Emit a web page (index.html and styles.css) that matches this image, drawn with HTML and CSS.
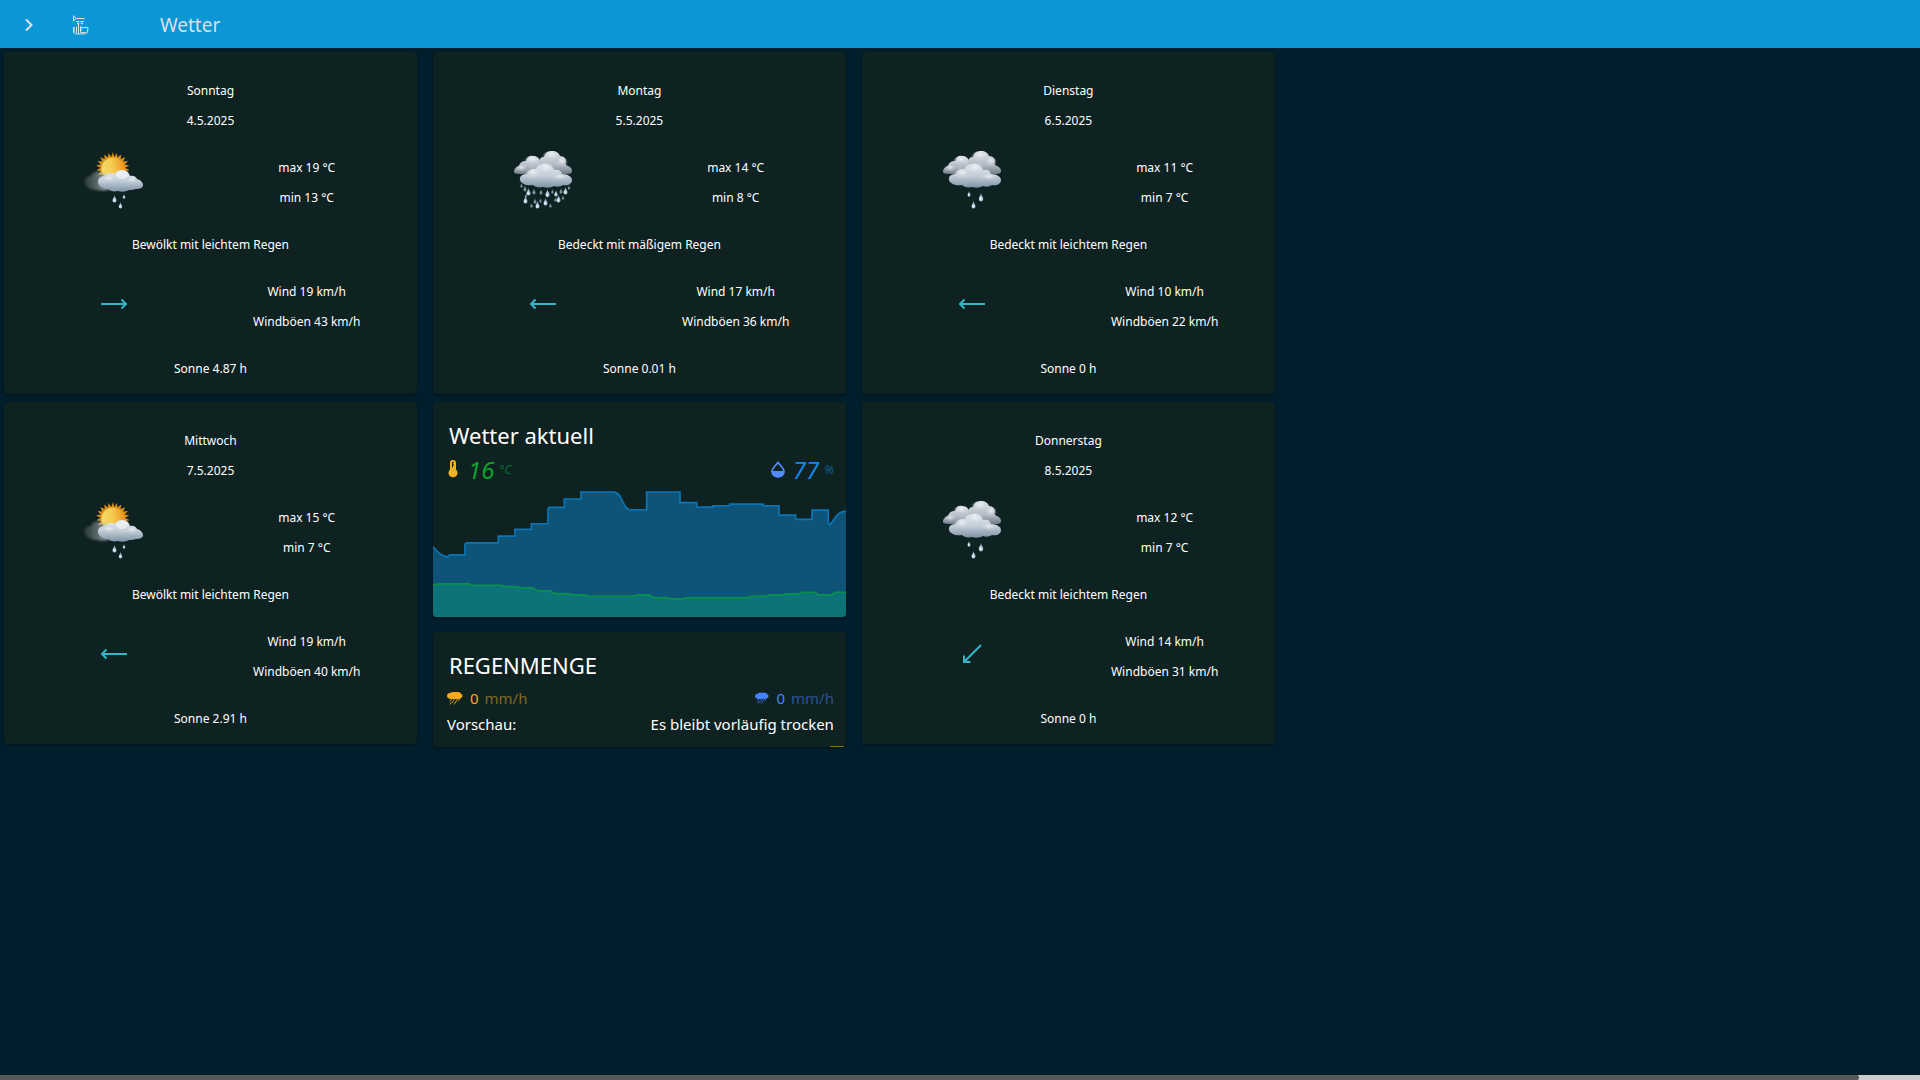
FILE: index.html
```html
<!DOCTYPE html>
<html lang="de">
<head>
  <meta charset="utf-8">
  <meta name="viewport" content="width=device-width, initial-scale=1">
  <title>Wetter</title>
  <link rel="stylesheet" href="styles.css">
</head>
<body>

  <!-- shared icons -->
  <svg class="defs" aria-hidden="true">
    <defs>
      <linearGradient id="cloud-light" x1="0" y1="0" x2="0" y2="1">
        <stop offset="0" stop-color="#e4eaf0"/>
        <stop offset="0.5" stop-color="#c3ced8"/>
        <stop offset="1" stop-color="#7f93a5"/>
      </linearGradient>
      <linearGradient id="cloud-dark" x1="0" y1="0" x2="0" y2="1">
        <stop offset="0" stop-color="#dfe3e9"/>
        <stop offset="0.6" stop-color="#b3bbc6"/>
        <stop offset="1" stop-color="#707b88"/>
      </linearGradient>
      <linearGradient id="haze" x1="0" y1="0" x2="1" y2="0">
        <stop offset="0" stop-color="#8a9496" stop-opacity="0.2"/>
        <stop offset="1" stop-color="#c5cccd" stop-opacity="0.8"/>
      </linearGradient>
      <linearGradient id="sun-ball" x1="0" y1="0.6" x2="1" y2="0.4">
        <stop offset="0" stop-color="#f3dc6c"/>
        <stop offset="0.5" stop-color="#f5cb50"/>
        <stop offset="1" stop-color="#ee9420"/>
      </linearGradient>
      <radialGradient id="puff" cx="0.5" cy="0.3" r="0.6">
        <stop offset="0" stop-color="#f4f6f8" stop-opacity="0.8"/>
        <stop offset="1" stop-color="#b4c0cb" stop-opacity="0"/>
      </radialGradient>
      <filter id="soft" x="-20%" y="-20%" width="140%" height="140%">
        <feGaussianBlur stdDeviation="1.2"/>
      </filter>
    </defs>

    <symbol id="drop" viewBox="0 0 6 10">
      <path d="M3 0c0 3 2.500 4 2.500 6.500a2.500 2.900 0 0 1-5 0C.5 4 3 3 3 0z" fill="#a9c5d6"/>
      <ellipse cx="2.500" cy="6.600" rx="1.200" ry="1.600" fill="#e3f2fa"/>
    </symbol>

    <symbol id="two-clouds" viewBox="0 0 60 60">
      <path d="M1 21c0-4 3-5 5-6 1-4 4-5 7-5 1-4 4-6 7-5 4 0 6 2 7 5 4 1 6 4 6 7 0 5-4 6-9 6H7c-4 0-6-1-6-2z" fill="url(#cloud-dark)"/>
      <path d="M26 11c0-3 2-5 5-5 1-4 4-6 8-6s7 2 8 5c4 0 6 3 6 6-1 2 0 3 2 4 3 1 4 3 4 5 0 3-3 3-7 3H30c-3-3-5-7-4-12z" fill="url(#cloud-dark)"/>
      <ellipse cx="19" cy="10" rx="8" ry="5" fill="url(#puff)"/>
      <ellipse cx="8" cy="18" rx="6" ry="4" fill="url(#puff)"/>
      <ellipse cx="38" cy="6" rx="9" ry="6" fill="url(#puff)"/>
      <ellipse cx="49" cy="12" rx="6" ry="6" fill="url(#puff)"/>
      <path d="M7 29c-1-4 3-6 7-6 1-4 5-6 9-5 1-4 5-5 9-5s8 2 9 6c4-1 7 0 8 4 6 0 10 3 10 6 0 4-4 6-9 5-3 2-6 2-9 1-3 2-8 2-11 1-4 1-8 0-10-2-6 1-12-1-13-5z" fill="url(#cloud-light)"/>
      <ellipse cx="33" cy="19" rx="9" ry="7" fill="url(#puff)"/>
      <ellipse cx="20" cy="24" rx="9" ry="6" fill="url(#puff)"/>
      <ellipse cx="47" cy="27" rx="9" ry="4" fill="url(#puff)"/>
    </symbol>

    <symbol id="sun-rain" viewBox="0 0 60 60">
      <path d="M29 1l1.200 5 2.800-4 .4 4.600 3.800-3.200-.6 4.600 4.600-1.800-2 4.200 4.800-.4-3.400 3.400 4.600 1.200-4.200 2.200 4.600 2.400-5 1 3.600 3.600H14l3-3.600-4.600-1 4.200-2.400-4.600-2.200 4.800-1.200-3.200-3.400 4.600.4-1.800-4.200 4.400 1.800-.6-4.600 3.600 3.200.8-4.600 2.600 4z" fill="#d98f18"/>
      <circle cx="29" cy="18" r="11.500" fill="url(#sun-ball)"/>
      <path d="M0 30c1-4 4-5 7-5 1-4 5-5 9-4 5 1 9 3 10 8v9c-4 2-9 2-13 1-6 0-13-4-13-9z" fill="url(#haze)" filter="url(#soft)"/>
      <path d="M14 31c0-4 3-6 7-6 2-3 6-4 10-2 1-3 4-4 7-4 4 0 7 2 8 6 4-1 6 1 7 3 4 1 6 4 6 6 0 3-3 4-7 4-3 1-5 1-7 1-3 2-8 2-11 1-4 1-8 0-10-2-5 0-10-3-10-7z" fill="url(#cloud-light)"/>
      <ellipse cx="38" cy="24" rx="6" ry="4" fill="#f1f4f7" opacity="0.700"/>
      <ellipse cx="25" cy="29" rx="8" ry="4" fill="url(#puff)"/>
      <ellipse cx="48" cy="30" rx="6" ry="4" fill="url(#puff)"/>
      <use href="#drop" x="28" y="44" width="5" height="8"/>
      <use href="#drop" x="38" y="43" width="4" height="5"/>
      <use href="#drop" x="34" y="51" width="5" height="7"/>
    </symbol>

    <symbol id="light-rain" viewBox="0 0 60 60">
      <use href="#two-clouds" width="60" height="60"/>
      <use href="#drop" x="25" y="40" width="4" height="6"/>
      <use href="#drop" x="36" y="42" width="6" height="9"/>
      <use href="#drop" x="29" y="50" width="5" height="8"/>
    </symbol>

    <symbol id="rain" viewBox="0 0 60 60">
      <g opacity="0.600">
        <use href="#drop" x="7" y="32" width="3" height="5"/>
        <use href="#drop" x="10" y="34" width="4" height="7"/>
        <use href="#drop" x="19" y="37" width="4" height="7"/>
        <use href="#drop" x="26" y="38" width="4" height="6"/>
        <use href="#drop" x="46" y="37" width="4" height="6"/>
        <use href="#drop" x="54" y="34" width="4" height="5"/>
        <use href="#drop" x="11" y="42" width="4" height="5"/>
        <use href="#drop" x="20" y="47" width="4" height="6"/>
        <use href="#drop" x="26" y="47" width="3" height="5"/>
        <use href="#drop" x="38" y="38" width="3" height="5"/>
        <use href="#drop" x="41" y="46" width="3" height="5"/>
        <use href="#drop" x="48" y="44" width="4" height="5"/>
        <use href="#drop" x="17" y="52" width="3" height="5"/>
        <use href="#drop" x="36" y="52" width="3" height="5"/>
      </g>
      <use href="#drop" x="13" y="37" width="5" height="8"/>
      <use href="#drop" x="32" y="38" width="5" height="9"/>
      <use href="#drop" x="41" y="39" width="4" height="7"/>
      <use href="#drop" x="50" y="36" width="5" height="8"/>
      <use href="#drop" x="10" y="45" width="5" height="8"/>
      <use href="#drop" x="30" y="47" width="5" height="8"/>
      <use href="#drop" x="43" y="44" width="5" height="8"/>
      <use href="#drop" x="22" y="50" width="5" height="8"/>
      <use href="#two-clouds" width="60" height="60"/>
    </symbol>

    <symbol id="arrow-right" viewBox="0 0 28 28">
      <path d="M1 14h25M21.500 9.500L26 14l-4.500 4.500" fill="none" stroke="#35b5c5" stroke-width="2"/>
    </symbol>
    <symbol id="arrow-left" viewBox="0 0 28 28">
      <path d="M27 14H2M6.500 9.500L2 14l4.500 4.500" fill="none" stroke="#35b5c5" stroke-width="2"/>
    </symbol>
    <symbol id="arrow-down-left" viewBox="0 0 28 28">
      <path d="M23 5L6 22M6 15.500V22h6.500" fill="none" stroke="#35b5c5" stroke-width="2"/>
    </symbol>

    <symbol id="rain-cloud" viewBox="0 0 16 13">
      <path d="M0 4c0-2 1-3 3-3 1-1 3-1 4-1h4c2 0 3 1 3 2 2 0 2 3 0 4 0 1-2 1-3 1H4C2 7 0 6 0 4z" fill="currentColor"/>
      <path d="M4.500 7L3 9.500M7.500 7L5 11M10.500 7L8 11M12.500 7L11 9.500M4.500 10L3 12.500M8.500 10.500L7 12.500" stroke="currentColor" opacity="0.800" fill="none"/>
    </symbol>
  </svg>

  <header class="topbar">
    <button class="menu-button" type="button" aria-label="Menü öffnen">
      <svg width="8" height="14" viewBox="0 0 8 14"><path d="M1 1.500L6.500 7 1 12.500" fill="none" stroke="#e3e3e3" stroke-width="2"/></svg>
    </button>
    <svg class="logo" width="17" height="20" viewBox="0 0 17 20" fill="none" stroke="#dcdfe1">
      <path d="M1.500.5v6M1.500 1l3 2.500h8M2 5l2-1M4 6.500h3M8.500 6.500H12M5 8.500h2l1-1 1 1h2M6 7.500v2M10 7.500v2"/>
      <path d="M4.500 11.500V18M6.500 8.500V19M1.500 12v5.500l3 1.500h8l3-1.500.5-5H9.500l-1 4.500M8.500 11v6.500h5"/>
      <path d="M2 12v5" stroke-width="2" opacity="0.600"/>
    </svg>
    <h1 class="page-title">Wetter</h1>
  </header>

  <main class="dashboard">

    <section class="card day">
      <div><p>Sonntag</p><p>4.5.2025</p></div>
      <div class="split">
        <svg class="weather" role="img" aria-label="Bewölkt mit leichtem Regen"><use href="#sun-rain"/></svg>
        <div><p>max 19 °C</p><p>min 13 °C</p></div>
      </div>
      <p>Bewölkt mit leichtem Regen</p>
      <div class="split">
        <svg class="arrow"><use href="#arrow-right"/></svg>
        <div><p>Wind 19 km/h</p><p>Windböen 43 km/h</p></div>
      </div>
      <p>Sonne 4.87 h</p>
    </section>

    <section class="card day">
      <div><p>Montag</p><p>5.5.2025</p></div>
      <div class="split">
        <svg class="weather" role="img" aria-label="Bedeckt mit mäßigem Regen"><use href="#rain"/></svg>
        <div><p>max 14 °C</p><p>min 8 °C</p></div>
      </div>
      <p>Bedeckt mit mäßigem Regen</p>
      <div class="split">
        <svg class="arrow"><use href="#arrow-left"/></svg>
        <div><p>Wind 17 km/h</p><p>Windböen 36 km/h</p></div>
      </div>
      <p>Sonne 0.01 h</p>
    </section>

    <section class="card day">
      <div><p>Dienstag</p><p>6.5.2025</p></div>
      <div class="split">
        <svg class="weather" role="img" aria-label="Bedeckt mit leichtem Regen"><use href="#light-rain"/></svg>
        <div><p>max 11 °C</p><p>min 7 °C</p></div>
      </div>
      <p>Bedeckt mit leichtem Regen</p>
      <div class="split">
        <svg class="arrow"><use href="#arrow-left"/></svg>
        <div><p>Wind 10 km/h</p><p>Windböen 22 km/h</p></div>
      </div>
      <p>Sonne 0 h</p>
    </section>

    <section class="card day">
      <div><p>Mittwoch</p><p>7.5.2025</p></div>
      <div class="split">
        <svg class="weather" role="img" aria-label="Bewölkt mit leichtem Regen"><use href="#sun-rain"/></svg>
        <div><p>max 15 °C</p><p>min 7 °C</p></div>
      </div>
      <p>Bewölkt mit leichtem Regen</p>
      <div class="split">
        <svg class="arrow"><use href="#arrow-left"/></svg>
        <div><p>Wind 19 km/h</p><p>Windböen 40 km/h</p></div>
      </div>
      <p>Sonne 2.91 h</p>
    </section>

    <div class="stack">
      <section class="card current">
        <h2>Wetter aktuell</h2>
        <div class="values">
          <div class="value temperature">
            <svg width="10" height="18" viewBox="0 0 10 18">
              <path d="M2 3a3 3 0 0 1 6 0v6.500a4.500 4.500 0 1 1-6 0z" fill="#f5b120"/>
              <path d="M6 2.500H4.500v5M4.500 5H6" fill="none" stroke="#0f2222"/>
            </svg>
            <span class="number">16</span><span class="unit">°C</span>
          </div>
          <div class="value humidity">
            <svg width="14" height="17" viewBox="0 0 14 17">
              <path d="M7 1.400C5 4 1 7.500 1 10.500a6 5.500 0 0 0 12 0C13 7.500 9 4 7 1.400z" fill="none" stroke="#4f8cff" stroke-width="1.700"/>
              <path d="M1 10h12a6 6 0 0 1-12 0z" fill="#4f8cff"/>
            </svg>
            <span class="number">77</span><span class="unit">%</span>
          </div>
        </div>
        <svg class="chart" viewBox="0 0 1239 386" preserveAspectRatio="none" role="img" aria-label="Verlauf von Temperatur und Luftfeuchte">
          <path class="humidity-area" d="M0 176Q25 206 44 206L50 200H96V168L100 164H196V144H246V124H295V107H345V62L349 58H394V33H444V12H541C570 12 568 65 592 65H641V12H741V44H791V57H840V53H890V48H990V53H1038V81H1088V94H1137V66H1186V106L1191 110C1204 96 1212 69 1239 69V386H0z"/>
          <path class="humidity-line" d="M0 176Q25 206 44 206L50 200H96V168L100 164H196V144H246V124H295V107H345V62L349 58H394V33H444V12H541C570 12 568 65 592 65H641V12H741V44H791V57H840V53H890V48H990V53H1038V81H1088V94H1137V66H1186V106L1191 110C1204 96 1212 69 1239 69"/>
          <path class="temperature-area" d="M0 290L20 287H108L118 291H205L215 295H250L265 299H300L315 308H350L365 316H405L415 320H455L465 324H600L612 320H650L662 328H700L712 332H750L765 328H945L957 324H1000L1010 320H1050L1057 317H1098L1108 312H1145L1157 320H1195L1207 312H1239V386H0z"/>
          <path class="temperature-line" d="M0 290L20 287H108L118 291H205L215 295H250L265 299H300L315 308H350L365 316H405L415 320H455L465 324H600L612 320H650L662 328H700L712 332H750L765 328H945L957 324H1000L1010 320H1050L1057 317H1098L1108 312H1145L1157 320H1195L1207 312H1239"/>
        </svg>
      </section>

      <section class="card rainfall">
        <h2>REGENMENGE</h2>
        <div class="rain-row">
          <div class="rain-value now"><svg width="16" height="13"><use href="#rain-cloud"/></svg><span>0</span><span class="rain-unit">mm/h</span></div>
          <div class="rain-value next"><svg width="14" height="13"><use href="#rain-cloud"/></svg><span>0</span><span class="rain-unit">mm/h</span></div>
        </div>
        <div class="rain-row preview"><span>Vorschau:</span><span>Es bleibt vorläufig trocken</span></div>
        <div class="rain-line"></div>
      </section>
    </div>

    <section class="card day">
      <div><p>Donnerstag</p><p>8.5.2025</p></div>
      <div class="split">
        <svg class="weather" role="img" aria-label="Bedeckt mit leichtem Regen"><use href="#light-rain"/></svg>
        <div><p>max 12 °C</p><p>min 7 °C</p></div>
      </div>
      <p>Bedeckt mit leichtem Regen</p>
      <div class="split">
        <svg class="arrow"><use href="#arrow-down-left"/></svg>
        <div><p>Wind 14 km/h</p><p>Windböen 31 km/h</p></div>
      </div>
      <p>Sonne 0 h</p>
    </section>

  </main>

  <div class="scroll-track"><div class="scroll-thumb"></div></div>

</body>
</html>
```

FILE: styles.css
```css
* {
  box-sizing: border-box;
}
body {
  margin: 0;
  min-height: 100vh;
  display: flex;
  flex-direction: column;
  background-color: #001e2b;
  color: #ffffff;
  font-family: 'Segoe UI', 'Noto Sans', sans-serif;
  font-size: 12px;
}
p, h1, h2 {
  margin: 0;
  font-weight: normal;
}
svg {
  display: block;
  flex-shrink: 0;
}
.defs {
  position: absolute;
  width: 0;
  height: 0;
}

/* top bar */
.topbar {
  display: flex;
  align-items: center;
  height: 48px;
  padding: 2px 15px 0;
  background-color: #0b97d6;
}
.menu-button {
  display: flex;
  align-items: center;
  justify-content: center;
  width: 28px;
  height: 28px;
  padding: 0;
  border: none;
  background: none;
  cursor: pointer;
}
.logo {
  margin-left: 29px;
}
.page-title {
  margin-left: 71px;
  color: #dcdfe1;
  font-size: 19px;
}

/* cards */
.dashboard {
  display: grid;
  grid-template-columns: repeat(3, 1fr);
  gap: 8px 16px;
  align-items: start;
  width: 66.4%;
  padding: 4px 0 0 4px;
}
.card {
  border-radius: 4px;
  background-color: #0f2222;
  box-shadow: 0 1px 2px rgba(0, 0, 0, 0.4);
  overflow: hidden;
}
.day {
  display: flex;
  flex-direction: column;
  gap: 17px;
  padding: 24px 14px 10px;
  line-height: 30px;
  text-align: center;
}
.split {
  display: grid;
  grid-template-columns: 1fr 1fr;
  align-items: start;
  justify-items: center;
  height: 60px;
}
.weather {
  width: 60px;
  height: 60px;
  margin-top: -2px;
}
.arrow {
  width: 28px;
  height: 28px;
  margin-top: 13px;
}

/* middle column */
.stack {
  display: flex;
  flex-direction: column;
  gap: 15px;
}
.card h2 {
  padding-left: 16px;
  font-size: 22px;
  line-height: 32px;
}
.current {
  padding-top: 17px;
}
.values {
  display: flex;
  justify-content: space-between;
  height: 37px;
  padding: 0 12px 0 15px;
}
.value {
  display: flex;
  align-items: center;
  height: 36px;
  font-style: italic;
}
.number {
  margin-left: 10px;
  font-size: 24px;
}
.humidity .number {
  margin-left: 8px;
}
.unit {
  margin-left: 5px;
  font-size: 12px;
}
.temperature .number {
  color: #0ea32d;
}
.temperature .unit {
  color: #0c7030;
}
.humidity .number {
  color: #1488e6;
}
.humidity .unit {
  color: #125a8a;
}
.chart {
  width: 100%;
  height: 129px;
}
.humidity-area {
  fill: #0e5478;
}
.humidity-line {
  fill: none;
  stroke: #0c75b5;
  stroke-width: 5;
}
.temperature-area {
  fill: #0c7478;
}
.temperature-line {
  fill: none;
  stroke: #0b9048;
  stroke-width: 5;
}

/* rainfall */
.rainfall {
  padding-top: 17px;
  font-size: 15px;
}
.rainfall h2 {
  padding-bottom: 4px;
}
.rain-row {
  display: flex;
  justify-content: space-between;
  align-items: center;
  height: 26px;
  padding: 0 12px 0 14px;
}
.rain-value {
  display: flex;
  align-items: center;
}
.rain-value span {
  margin-left: 7px;
}
.rain-value .rain-unit {
  margin-left: 6px;
}
.now {
  color: #f5a91e;
}
.now .rain-unit {
  color: #84671f;
}
.next {
  color: #4583ff;
}
.next .rain-unit {
  color: #2b5395;
}
.rain-line {
  width: 14px;
  height: 1px;
  margin: 9px 2px 0 auto;
  background-color: #8f701f;
}

/* horizontal scroll indicator */
.scroll-track {
  margin-top: auto;
  height: 5px;
  background-color: #cdcdcd;
}
.scroll-thumb {
  width: 96.8%;
  height: 5px;
  background-color: #585858;
  border-radius: 0 2px 2px 0;
}
```
